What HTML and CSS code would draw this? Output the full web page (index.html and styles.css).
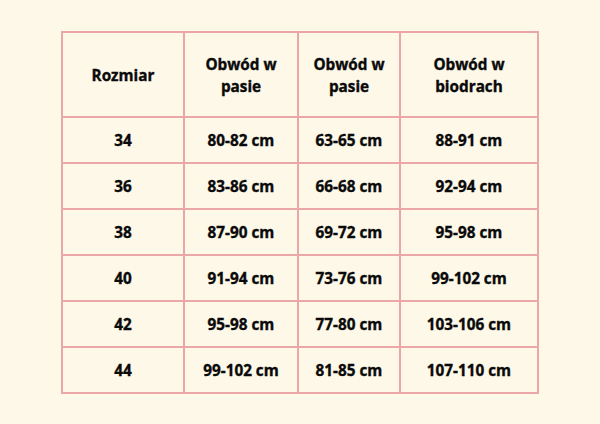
FILE: index.html
```html
<!DOCTYPE html>
<html>
<head>
<meta charset="utf-8">
<link rel="stylesheet" href="styles.css">
</head>
<body>
<div class="page">
<table class="sizes">
<colgroup>
<col class="c1"><col class="c2"><col class="c3"><col class="c4">
</colgroup>
<thead>
<tr><th>Rozmiar</th><th>Obwód w<br>pasie</th><th>Obwód w<br>pasie</th><th>Obwód w<br>biodrach</th></tr>
</thead>
<tbody>
<tr><td>34</td><td>80-82 cm</td><td>63-65 cm</td><td>88-91 cm</td></tr>
<tr><td>36</td><td>83-86 cm</td><td>66-68 cm</td><td>92-94 cm</td></tr>
<tr><td>38</td><td>87-90 cm</td><td>69-72 cm</td><td>95-98 cm</td></tr>
<tr><td>40</td><td>91-94 cm</td><td>73-76 cm</td><td>99-102 cm</td></tr>
<tr><td>42</td><td>95-98 cm</td><td>77-80 cm</td><td>103-106 cm</td></tr>
<tr><td>44</td><td>99-102 cm</td><td>81-85 cm</td><td>107-110 cm</td></tr>
</tbody>
</table>
</div>
</body>
</html>
```
FILE: styles.css
```css
html, body {
  margin: 0;
  padding: 0;
  background: #fdf8e8;
}
.page {
  width: 600px;
  height: 424px;
  padding: 31px 0 0 61px;
  box-sizing: border-box;
}
.sizes {
  border-collapse: collapse;
  width: 478px;
  table-layout: fixed;
  font-family: "Open Sans", sans-serif;
  font-weight: 700;
  font-size: 15.3px;
  color: #0a0a0a;
  -webkit-text-stroke: 0.35px #0a0a0a;
  text-align: center;
}
.c1 { width: 122px; }
.c2 { width: 114px; }
.c3 { width: 102px; }
.c4 { width: 138px; }
.sizes th, .sizes td {
  border: 2px solid #eba7a7;
  padding: 0;
  vertical-align: middle;
}
.sizes th {
  height: 83px;
  line-height: 22px;
  font-weight: 700;
}
.sizes td {
  height: 44px;
}
```
